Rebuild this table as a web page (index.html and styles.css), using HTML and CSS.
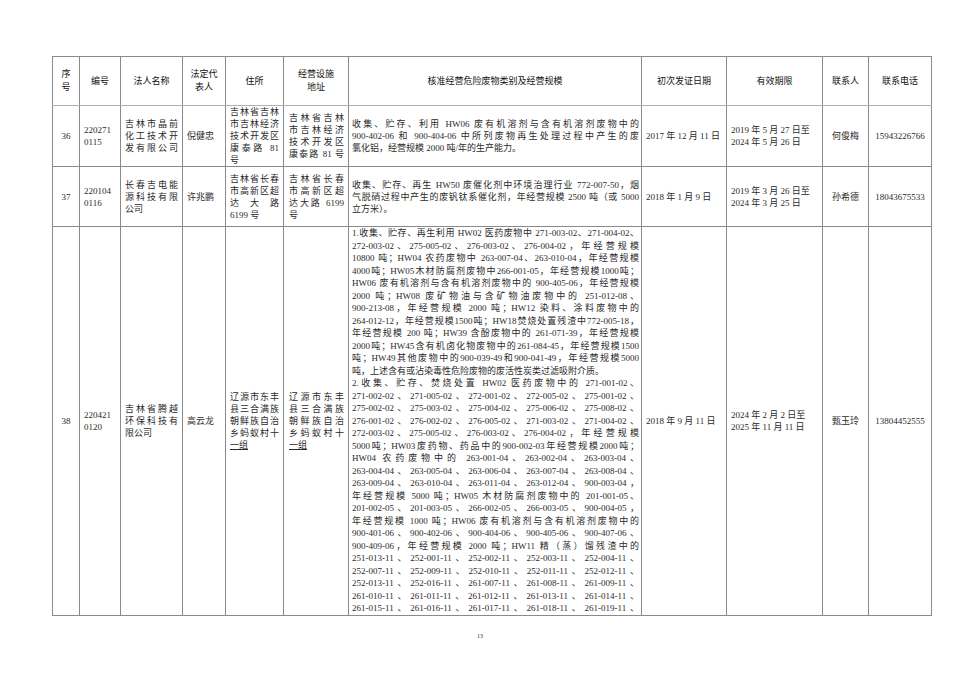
FILE: index.html
```html
<!DOCTYPE html>
<html lang="zh-CN">
<head>
<meta charset="utf-8">
<title>危险废物经营许可证</title>
<link rel="stylesheet" href="styles.css">
</head>
<body>
<div class="page">
  <table class="grid">
    <colgroup>
      <col class="c-no"><col class="c-code"><col class="c-name"><col class="c-rep"><col class="c-addr"><col class="c-site">
      <col class="c-scope"><col class="c-date"><col class="c-valid"><col class="c-person"><col class="c-phone">
    </colgroup>
    <thead>
      <tr class="r-head">
        <th>序<br>号</th>
        <th>编号</th>
        <th>法人名称</th>
        <th>法定代<br>表人</th>
        <th>住所</th>
        <th>经营设施<br>地址</th>
        <th>核准经营危险废物类别及经营规模</th>
        <th>初次发证日期</th>
        <th>有效期限</th>
        <th>联系人</th>
        <th>联系电话</th>
      </tr>
    </thead>
    <tbody>
      <tr class="r-36">
        <td class="center">36</td>
        <td class="left">220271<br>0115</td>
        <td class="just"><span class="j">吉林市晶前</span><span class="j">化工技术开</span><span class="j">发有限公司</span></td>
        <td class="left">倪健忠</td>
        <td class="just"><span class="j">吉林省吉林</span><span class="j">市吉林经济</span><span class="j">技术开发区</span><span class="j">康泰路 81</span><span class="l">号</span></td>
        <td class="just site"><span class="j">吉林省吉林</span><span class="j">市吉林经济</span><span class="j">技术开发区</span><span class="j">康泰路 81 号</span></td>
        <td class="scope"><span class="j">收集、贮存、利用 HW06 废有机溶剂与含有机溶剂废物中的</span><span class="j">900-402-06 和 900-404-06 中所列废物再生处理过程中产生的废</span><span class="l">氯化铝，经营规模 2000 吨/年的生产能力。</span></td>
        <td class="left date">2017 年 12 月 11 日</td>
        <td class="left">2019 年 5 月 27 日至<br>2024 年 5 月 26 日</td>
        <td class="center">何俊梅</td>
        <td class="center">15943226766</td>
      </tr>
      <tr class="r-37">
        <td class="center">37</td>
        <td class="left">220104<br>0116</td>
        <td class="just"><span class="j">长春吉电能</span><span class="j">源科技有限</span><span class="l">公司</span></td>
        <td class="left">许兆鹏</td>
        <td class="just"><span class="j">吉林省长春</span><span class="j">市高新区超</span><span class="j">达大路</span><span class="l">6199 号</span></td>
        <td class="just site"><span class="j">吉林省长春</span><span class="j">市高新区超</span><span class="j">达大路 6199</span><span class="l">号</span></td>
        <td class="scope"><span class="j">收集、贮存、再生 HW50 废催化剂中环境治理行业 772-007-50，烟</span><span class="j">气脱硝过程中产生的废钒钛系催化剂，年经营规模 2500 吨（或 5000</span><span class="l">立方米）。</span></td>
        <td class="left date">2018 年 1 月 9 日</td>
        <td class="left">2019 年 3 月 26 日至<br>2024 年 3 月 25 日</td>
        <td class="center">孙希德</td>
        <td class="center">18043675533</td>
      </tr>
      <tr class="r-38">
        <td class="center">38</td>
        <td class="left">220421<br>0120</td>
        <td class="just"><span class="j">吉林省腾越</span><span class="j">环保科技有</span><span class="l">限公司</span></td>
        <td class="left">高云龙</td>
        <td class="just"><span class="j">辽源市东丰</span><span class="j">县三合满族</span><span class="j">朝鲜族自治</span><span class="j">乡蚂蚁村十</span><span class="l"><u>一组</u></span></td>
        <td class="just site"><span class="j">辽源市东丰</span><span class="j">县三合满族</span><span class="j">朝鲜族自治</span><span class="j">乡蚂蚁村十</span><span class="l"><u>一组</u></span></td>
        <td class="scope big">
          <span class="j">1.收集、贮存、再生利用 HW02 医药废物中 271-003-02、271-004-02、</span>
          <span class="j">272-003-02、275-005-02、276-003-02、276-004-02，年经营规模</span>
          <span class="j">10800 吨；HW04 农药废物中 263-007-04、263-010-04，年经营规模</span>
          <span class="j">4000吨；HW05木材防腐剂废物中266-001-05，年经营规模1000吨；</span>
          <span class="j">HW06 废有机溶剂与含有机溶剂废物中的 900-405-06，年经营规模</span>
          <span class="j">2000 吨；HW08 废矿物油与含矿物油废物中的 251-012-08、</span>
          <span class="j">900-213-08，年经营规模 2000 吨；HW12 染料、涂料废物中的</span>
          <span class="j">264-012-12，年经营规模1500吨；HW18焚烧处置残渣中772-005-18，</span>
          <span class="j">年经营规模 200 吨；HW39 含酚废物中的 261-071-39，年经营规模</span>
          <span class="j">2000吨；HW45含有机卤化物废物中的261-084-45，年经营规模1500</span>
          <span class="j">吨；HW49其他废物中的900-039-49和900-041-49，年经营规模5000</span>
          <span class="l">吨，上述含有或沾染毒性危险废物的废活性炭类过滤吸附介质。</span>
          <span class="j">2.收集、贮存、焚烧处置 HW02 医药废物中的 271-001-02、</span>
          <span class="j">271-002-02、271-005-02、272-001-02、272-005-02、275-001-02、</span>
          <span class="j">275-002-02、275-003-02、275-004-02、275-006-02、275-008-02、</span>
          <span class="j">276-001-02、276-002-02、276-005-02、271-003-02、271-004-02、</span>
          <span class="j">272-003-02、275-005-02、276-003-02、276-004-02，年经营规模</span>
          <span class="j">5000吨；HW03废药物、药品中的900-002-03年经营规模2000吨；</span>
          <span class="j">HW04 农药废物中的 263-001-04、263-002-04、263-003-04、</span>
          <span class="j">263-004-04、263-005-04、263-006-04、263-007-04、263-008-04、</span>
          <span class="j">263-009-04、263-010-04、263-011-04、263-012-04、900-003-04，</span>
          <span class="j">年经营规模 5000 吨；HW05 木材防腐剂废物中的 201-001-05、</span>
          <span class="j">201-002-05、201-003-05、266-002-05、266-003-05、900-004-05，</span>
          <span class="j">年经营规模 1000 吨；HW06 废有机溶剂与含有机溶剂废物中的</span>
          <span class="j">900-401-06、900-402-06、900-404-06、900-405-06、900-407-06、</span>
          <span class="j">900-409-06，年经营规模 2000 吨；HW11 精（蒸）馏残渣中的</span>
          <span class="j">251-013-11、252-001-11、252-002-11、252-003-11、252-004-11、</span>
          <span class="j">252-007-11、252-009-11、252-010-11、252-011-11、252-012-11、</span>
          <span class="j">252-013-11、252-016-11、261-007-11、261-008-11、261-009-11、</span>
          <span class="j">261-010-11、261-011-11、261-012-11、261-013-11、261-014-11、</span>
          <span class="j">261-015-11、261-016-11、261-017-11、261-018-11、261-019-11、</span>
        </td>
        <td class="left date">2018 年 9 月 11 日</td>
        <td class="left">2024 年 2 月 2 日至<br>2025 年 11 月 11 日</td>
        <td class="center">甄玉玲</td>
        <td class="center">13804452555</td>
      </tr>
    </tbody>
  </table>
  <div class="folio">13</div>
</div>
</body>
</html>
```

FILE: styles.css
```css
html, body {
  margin: 0;
  padding: 0;
  background: #ffffff;
}

body {
  font-family: "Liberation Serif", "Noto Sans CJK SC", serif;
  color: #2a2a2a;
  font-size: 9px;
}

.page {
  width: 960px;
  height: 679px;
  padding: 56px 0 0 52px;
  box-sizing: border-box;
}

.grid {
  border-collapse: collapse;
  table-layout: fixed;
  width: 879px;
  border: 1px solid #6a6a6a;
}

.c-no { width: 27px; }
.c-code { width: 41px; }
.c-name { width: 62px; }
.c-rep { width: 43px; }
.c-addr { width: 58px; }
.c-site { width: 65px; }
.c-scope { width: 293px; }
.c-date { width: 85px; }
.c-valid { width: 96px; }
.c-person { width: 46px; }
.c-phone { width: 63px; }

.grid th,
.grid td {
  border: 1px solid #8a8a8a;
  padding: 0 4px;
  vertical-align: middle;
  line-height: 12px;
  overflow: hidden;
}

.grid th {
  font-weight: 400;
  font-size: 9px;
  line-height: 13px;
  text-align: center;
  color: #111;
}

.r-head { height: 49px; }
.r-36 { height: 61px; }
.r-37 { height: 60px; }

.r-head th { border-bottom-color: #b0b0b0; }

.center { text-align: center; }
.left { text-align: left; }

.grid td.date { padding: 0 2px 0 4px; }

.just .j,
.scope .j {
  display: block;
  text-align: justify;
  text-align-last: justify;
}

.just .l,
.scope .l {
  display: block;
  text-align: left;
}

.grid td.site { padding-left: 5px; padding-right: 4px; }

.grid td.scope {
  padding: 0 2px 0 3px;
}

.grid td.big {
  line-height: 12.5px;
}

.grid td.center:last-child { padding: 0 2px; }

.folio {
  width: 856px;
  text-align: center;
  font-size: 6px;
  margin-top: 17px;
  color: #333;
}
```
